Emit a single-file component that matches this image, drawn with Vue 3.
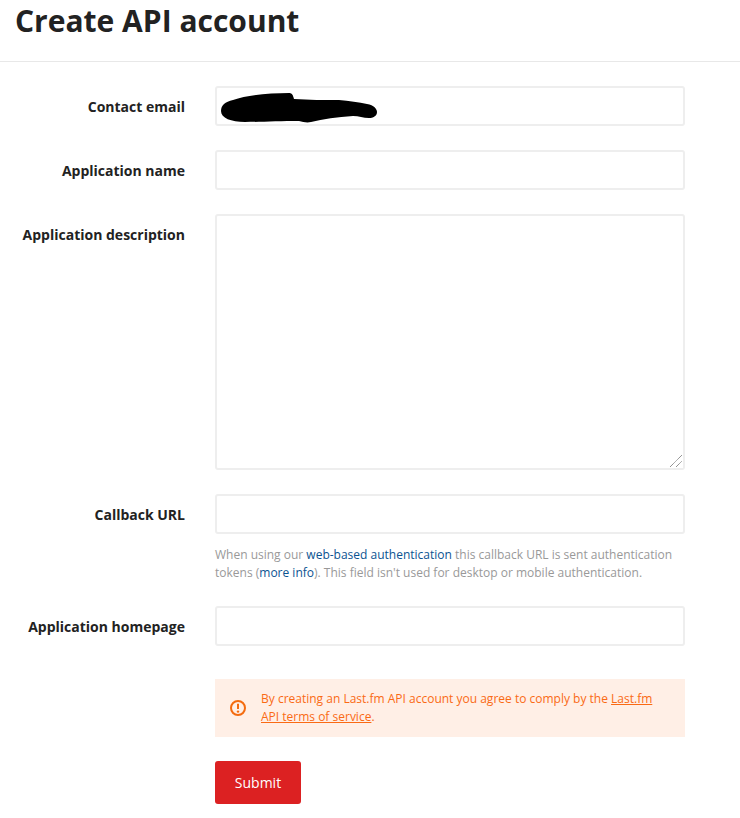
<template>
  <div class="page">
    <h1 class="title">Create API account</h1>

    <form class="form" @submit.prevent>
      <label class="label" for="email">Contact email</label>
      <div class="field">
        <input id="email" class="input" type="text" />
        <!-- scribbled over in the original -->
        <svg class="blob" width="160" height="34" viewBox="0 0 160 34">
          <path d="M2 20C2 14 6 11 14 9C28 4 50 2 70 2C73 2 74 4 75 8C90 9 105 9 120 9C130 10 140 11 148 13C155 14 158 18 158 21C158 25 154 27 150 27C144 27 140 25 134 25C118 26 104 28 92 31C88 32 84 31 80 30C60 30 40 31 26 31C12 31 2 27 2 20Z" fill="#000" />
        </svg>
      </div>

      <label class="label" for="name">Application name</label>
      <div class="field">
        <input id="name" class="input" type="text" />
      </div>

      <label class="label" for="description">Application description</label>
      <div class="field">
        <textarea id="description" class="input textarea"></textarea>
        <svg class="grip" width="14" height="14" viewBox="0 0 14 14">
          <path d="M1 13L13 1M7 13L13 7" stroke="#666" stroke-width="1" stroke-dasharray="1 0.6" fill="none" />
        </svg>
      </div>

      <label class="label" for="callback">Callback URL</label>
      <div class="field">
        <input id="callback" class="input" type="text" />
        <p class="help">
          When using our <a href="#">web-based authentication</a> this callback URL is sent authentication
          tokens (<a href="#">more info</a>). This field isn't used for desktop or mobile authentication.
        </p>
      </div>

      <label class="label" for="homepage">Application homepage</label>
      <div class="field">
        <input id="homepage" class="input" type="text" />
      </div>

      <div class="field wide alert">
        <svg class="alert-icon" width="18" height="18" viewBox="0 0 18 18">
          <circle cx="9" cy="9" r="7" fill="none" stroke="#f46b0f" stroke-width="2" />
          <path d="M9 4.8V10" stroke="#f46b0f" stroke-width="2" fill="none" />
          <circle cx="9" cy="12.6" r="1.2" fill="#f46b0f" />
        </svg>
        <p>By creating an Last.fm API account you agree to comply by the <a href="#">Last.fm API terms of service</a>.</p>
      </div>

      <div class="field wide">
        <button class="submit" type="submit">Submit</button>
      </div>
    </form>
  </div>
</template>

<script setup>
</script>

<style scoped>
.page {
  width: 740px;
  color: #222;
  font-family: "Open Sans", sans-serif;
}

.title {
  height: 62px;
  margin: 0;
  padding: 0 0 0 15px;
  box-sizing: border-box;
  border-bottom: 1px solid #e8e8e8;
  font-size: 30px;
  font-weight: 700;
  line-height: 42px;
  color: #222;
}

.form {
  display: grid;
  grid-template-columns: 170px 470px;
  column-gap: 30px;
  row-gap: 24px;
  padding: 24px 55px 0 15px;
}

.label {
  padding-top: 11px;
  font-size: 14px;
  font-weight: 700;
  line-height: 20px;
  text-align: right;
  white-space: nowrap;
}

.field {
  position: relative;
  min-width: 0;
}

.wide {
  grid-column: 2;
}

.input {
  display: block;
  width: 100%;
  height: 40px;
  box-sizing: border-box;
  border: 2px solid #eee;
  border-radius: 3px;
  background: #fff;
  outline: none;
  padding: 8px;
  font-family: inherit;
  font-size: 14px;
}

.textarea {
  height: 256px;
  resize: vertical;
}

/* native grip is smaller than the one in the screenshot */
.textarea::-webkit-resizer {
  background: #fff;
}

.grip {
  position: absolute;
  right: 2px;
  bottom: 2px;
  pointer-events: none;
}

.blob {
  position: absolute;
  left: 4px;
  top: 5px;
}

.help {
  margin: 12px 0 0;
  font-size: 12px;
  line-height: 18px;
  color: #999;
}

.help a {
  color: #0b5391;
  text-decoration: none;
}

.alert {
  display: flex;
  align-items: center;
  gap: 14px;
  height: 58px;
  margin-top: 9px;
  padding: 0 14px;
  box-sizing: border-box;
  background: #ffefe6;
  color: #fa6a14;
  font-size: 12px;
  line-height: 18px;
}

.alert p {
  margin: 0;
}

.alert a {
  color: inherit;
}

.alert-icon {
  flex: none;
}

.submit {
  display: block;
  width: 86px;
  height: 43px;
  border: none;
  border-radius: 3px;
  background: #dc2122;
  color: #fff;
  font-family: inherit;
  font-size: 14px;
  cursor: pointer;
}
</style>
